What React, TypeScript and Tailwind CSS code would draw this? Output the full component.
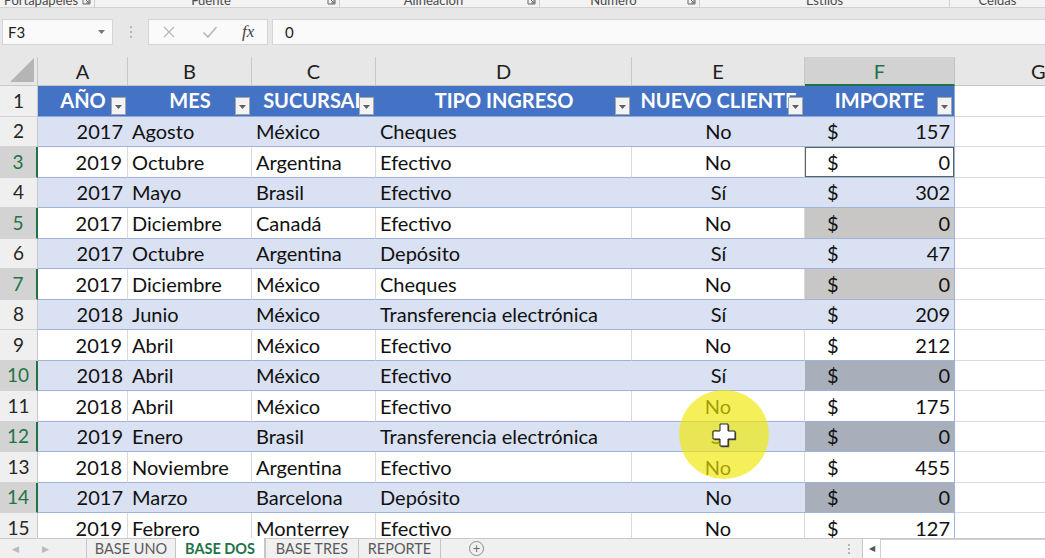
import React from 'react';

const rows = [
  { n: 2, y: 2017, m: 'Agosto', s: 'México', t: 'Cheques', c: 'No', v: 157 },
  { n: 3, y: 2019, m: 'Octubre', s: 'Argentina', t: 'Efectivo', c: 'No', v: 0 },
  { n: 4, y: 2017, m: 'Mayo', s: 'Brasil', t: 'Efectivo', c: 'Sí', v: 302 },
  { n: 5, y: 2017, m: 'Diciembre', s: 'Canadá', t: 'Efectivo', c: 'No', v: 0 },
  { n: 6, y: 2017, m: 'Octubre', s: 'Argentina', t: 'Depósito', c: 'Sí', v: 47 },
  { n: 7, y: 2017, m: 'Diciembre', s: 'México', t: 'Cheques', c: 'No', v: 0 },
  { n: 8, y: 2018, m: 'Junio', s: 'México', t: 'Transferencia electrónica', c: 'Sí', v: 209 },
  { n: 9, y: 2019, m: 'Abril', s: 'México', t: 'Efectivo', c: 'No', v: 212 },
  { n: 10, y: 2018, m: 'Abril', s: 'México', t: 'Efectivo', c: 'Sí', v: 0 },
  { n: 11, y: 2018, m: 'Abril', s: 'México', t: 'Efectivo', c: 'No', v: 175 },
  { n: 12, y: 2019, m: 'Enero', s: 'Brasil', t: 'Transferencia electrónica', c: 'Sí', v: 0 },
  { n: 13, y: 2018, m: 'Noviembre', s: 'Argentina', t: 'Efectivo', c: 'No', v: 455 },
  { n: 14, y: 2017, m: 'Marzo', s: 'Barcelona', t: 'Depósito', c: 'No', v: 0 },
  { n: 15, y: 2019, m: 'Febrero', s: 'Monterrey', t: 'Efectivo', c: 'No', v: 127 },
];

const selected = [3, 5, 7, 10, 12, 14];

const Launcher = () => (
  <svg width="9" height="9" viewBox="0 0 9 9" className="shrink-0">
    <path d="M1 1h7v7H1z" fill="none" stroke="#666" strokeWidth="1" />
    <path d="M3 3l4 4M7 4v3H4" fill="none" stroke="#666" strokeWidth="1" />
  </svg>
);

const FilterButton = () => (
  <div className="absolute right-[2px] bottom-[1px] w-[15px] h-[18px] bg-[#f3f3f3] border border-[#a6a6a6] flex items-center justify-center pt-[3px]">
    <svg width="7" height="4" viewBox="0 0 7 4">
      <path d="M0 0h7L3.5 4z" fill="#606060" />
    </svg>
  </div>
);

function RibbonLabels() {
  const groups = [
    { w: 95, label: 'Portapapeles', launcher: true, sep: true },
    { w: 245, label: 'Fuente', launcher: true, sep: true },
    { w: 200, label: 'Alineación', launcher: true, sep: true },
    { w: 160, label: 'Número', launcher: true, sep: true },
    { w: 250, label: 'Estilos', launcher: false, sep: true },
    { w: 95, label: 'Celdas', launcher: false, sep: false },
  ];
  return (
    <div className="h-[8px] shrink-0 overflow-hidden bg-[#f3f3f3] border-b border-[#d2d2d2] flex">
      {groups.map((g, i) => (
        <div key={i} style={{ width: g.w }} className="shrink-0 flex items-start -mt-[8px] h-[16px]">
          <div className="flex-1 text-center text-[13px] leading-[16px] text-[#4a4a4a]">{g.label}</div>
          {g.launcher && <div className="mt-[4px] mr-[3px]"><Launcher /></div>}
          {g.sep && <div className="w-px h-[16px] bg-[#cfcfcf]" />}
        </div>
      ))}
    </div>
  );
}

function FormulaBar() {
  return (
    <div className="h-[49px] shrink-0 bg-[#e7e7e7] flex items-start pt-[11px] pl-[2px]">
      <div className="w-[111px] h-[26px] bg-[#fafafa] border border-[#d6d6d6] flex items-center justify-between pl-[5px] pr-[7px]">
        <span className="text-[15px] text-[#222]">F3</span>
        <svg width="7" height="4" viewBox="0 0 7 4"><path d="M0 0h7L3.5 4z" fill="#777" /></svg>
      </div>
      <div className="w-[35px] h-[26px] flex flex-col items-center justify-center gap-[3px]">
        <div className="w-[2px] h-[2px] bg-[#b5b5b5]" />
        <div className="w-[2px] h-[2px] bg-[#b5b5b5]" />
        <div className="w-[2px] h-[2px] bg-[#b5b5b5]" />
      </div>
      <div className="w-[120px] h-[26px] bg-[#fafafa] border border-[#d6d6d6] flex items-center pl-[12px]">
        <svg width="14" height="14" viewBox="0 0 14 14" className="ml-[1px]">
          <path d="M2 2l10 10M12 2L2 12" stroke="#b8b8b8" strokeWidth="1.3" />
        </svg>
        <svg width="16" height="14" viewBox="0 0 16 14" className="ml-[26px]">
          <path d="M1.5 7.5l4.5 4.5 8.5-10" fill="none" stroke="#b8b8b8" strokeWidth="1.6" />
        </svg>
        <span className="ml-[24px] text-[17px] italic text-[#444] font-['Liberation_Serif',serif]">fx</span>
      </div>
      <div className="w-[4px]" />
      <div className="flex-1 h-[26px] bg-[#fafafa] border border-[#d6d6d6] border-r-0 flex items-center pl-[12px]">
        <span className="text-[15px] text-[#222]">0</span>
      </div>
    </div>
  );
}

const colW = [90, 124, 124, 256, 173, 150];
const letters = ['A', 'B', 'C', 'D', 'E', 'F'];
const headers = ['AÑO', 'MES', 'SUCURSAL', 'TIPO INGRESO', 'NUEVO CLIENTE', 'IMPORTE'];

function ColumnHeaders() {
  return (
    <div className="h-[29px] shrink-0 flex bg-[#e7e7e7]">
      <div className="w-[38px] shrink-0 relative border-r border-[#c8c8c8] border-b border-b-[#c8c8c8]">
        <svg width="24" height="24" viewBox="0 0 24 24" className="absolute right-[3px] bottom-[3px]">
          <path d="M24 0v24H0z" fill="#b5b5b5" />
        </svg>
      </div>
      {letters.map((l, i) =>
        l === 'F' ? (
          <div
            key={l}
            style={{ width: colW[i] }}
            className="shrink-0 bg-[#d2d2d2] border-r border-[#c0c0c0] border-b-2 border-b-[#217346] flex items-end justify-center pb-[1px] text-[20px] leading-[24px] text-[#217346]"
          >
            {l}
          </div>
        ) : (
          <div
            key={l}
            style={{ width: colW[i] }}
            className="shrink-0 border-r border-[#c8c8c8] border-b border-b-[#c8c8c8] flex items-end justify-center pb-[2px] text-[20px] leading-[24px] text-[#1f1f1f]"
          >
            {l}
          </div>
        )
      )}
      <div className="flex-1 border-b border-[#c8c8c8] flex items-end pb-[2px] pl-[76px] text-[20px] leading-[24px] text-[#1f1f1f]">
        G
      </div>
    </div>
  );
}

function RowHeader({ n }: { n: number }) {
  const sel = selected.includes(n);
  return (
    <div
      className={
        'w-[38px] shrink-0 h-full flex items-end justify-center pb-[3px] text-[19px] leading-[24px] border-b border-[#d3d3d3] ' +
        (sel
          ? 'bg-[#d3d3d3] text-[#217346] border-r-2 border-r-[#217346]'
          : 'bg-[#efefef] text-[#262626] border-r border-r-[#c8c8c8]')
      }
    >
      {n}
    </div>
  );
}

function HeaderRow() {
  return (
    <div className="h-[30.5px] shrink-0 flex">
      <RowHeader n={1} />
      {headers.map((h, i) => (
        <div
          key={h}
          style={{ width: colW[i] }}
          className={
            'shrink-0 h-full relative bg-[#4472c4] border-b border-[#8ea9db] flex items-end justify-center pb-[4px] text-[20px] leading-[24px] font-bold text-white overflow-hidden ' +
            (i === 5 ? 'border-r border-r-[#8ea9db]' : '')
          }
        >
          <span className="whitespace-nowrap">{h}</span>
          <FilterButton />
        </div>
      ))}
      <div className="flex-1 h-full bg-white border-b border-[#dadada]" />
    </div>
  );
}

function DataRow({ r }: { r: (typeof rows)[number] }) {
  const blue = r.n % 2 === 0;
  const base =
    'shrink-0 h-full flex items-end pb-[3px] text-[20px] leading-[24px] text-[#111] border-b border-[#9fb4dc] whitespace-nowrap overflow-hidden ';
  const fill = blue ? 'bg-[#d9e1f2] ' : 'bg-white border-r border-r-[#dadada] ';
  const sel = selected.includes(r.n);
  let fCls = 'bg-[#d9e1f2] ';
  if (!blue) fCls = 'bg-white ';
  if (sel && r.n === 3) fCls = 'bg-white shadow-[inset_0_0_0_1px_#55655c] ';
  else if (sel && blue) fCls = 'bg-[#a9afba] ';
  else if (sel) fCls = 'bg-[#c8c7c5] ';
  return (
    <div className="h-[30.5px] shrink-0 flex">
      <RowHeader n={r.n} />
      <div style={{ width: colW[0] }} className={base + fill + 'justify-end pr-[5px]'}>
        {r.y}
      </div>
      <div style={{ width: colW[1] }} className={base + fill + 'pl-[4px]'}>
        {r.m}
      </div>
      <div style={{ width: colW[2] }} className={base + fill + 'pl-[4px]'}>
        {r.s}
      </div>
      <div style={{ width: colW[3] }} className={base + fill + 'pl-[4px]'}>
        {r.t}
      </div>
      <div style={{ width: colW[4] }} className={base + fill + 'justify-center'}>
        {r.c}
      </div>
      <div
        style={{ width: colW[5] }}
        className={base + fCls + 'border-r border-r-[#9fb4dc] justify-between pl-[22px] pr-[4px]'}
      >
        <span>$</span>
        <span>{r.v}</span>
      </div>
      <div className="flex-1 h-full bg-white border-b border-[#dadada]" />
    </div>
  );
}

function TabBar() {
  const tabs = ['BASE UNO', 'BASE DOS', 'BASE TRES', 'REPORTE'];
  const widths = [89, 90, 93, 82];
  return (
    <div className="h-[20px] shrink-0 bg-[#f0f0f0] border-t border-[#c8c8c8] flex items-stretch text-[14.5px] leading-[19px]">
      <div className="w-[86px] shrink-0 flex items-center text-[9px] text-[#b9b9b9]">
        <span className="ml-[12px]">◀</span>
        <span className="ml-[23px]">▶</span>
      </div>
      {tabs.map((t, i) =>
        i === 1 ? (
          <div
            key={t}
            style={{ width: widths[i] }}
            className="shrink-0 bg-white border-l border-r border-[#c6c6c6] -mt-px flex items-center justify-center font-bold text-[#217346]"
          >
            {t}
          </div>
        ) : (
          <div
            key={t}
            style={{ width: widths[i] }}
            className="shrink-0 border-l border-[#c6c6c6] flex items-center justify-center text-[#5a5a5a]"
          >
            {t}
          </div>
        )
      )}
      <div className="w-[72px] shrink-0 border-l border-[#c6c6c6] flex items-center justify-center">
        <div className="w-[15px] h-[15px] rounded-full border border-[#8a8a8a] flex items-center justify-center text-[13px] leading-none text-[#6a6a6a]">
          +
        </div>
      </div>
      <div className="flex-1" />
      <div className="w-[14px] flex flex-col items-center justify-center gap-[2px] mr-[6px]">
        <div className="w-[2px] h-[2px] bg-[#b5b5b5]" />
        <div className="w-[2px] h-[2px] bg-[#b5b5b5]" />
        <div className="w-[2px] h-[2px] bg-[#b5b5b5]" />
      </div>
      <div className="w-[183px] shrink-0 flex bg-white border-l border-[#c8c8c8]">
        <div className="w-[18px] flex items-center justify-center text-[8px] text-[#555] border-r border-[#d0d0d0]">◀</div>
        <div className="flex-1 border-t border-[#d0d0d0]" />
      </div>
    </div>
  );
}

export default function App() {
  return (
    <div className="w-[1045px] h-[558px] overflow-hidden relative flex flex-col bg-[#e7e7e7] font-['Lato','Noto_Sans',sans-serif]">
      <RibbonLabels />
      <FormulaBar />
      <ColumnHeaders />
      <div className="flex-1 overflow-hidden flex flex-col bg-white">
        <HeaderRow />
        {rows.map((r) => (
          <DataRow key={r.n} r={r} />
        ))}
      </div>
      <TabBar />

      {/* cursor highlight */}
      <div className="absolute left-[679px] top-[390px] w-[90px] h-[89px] rounded-full bg-[#f0e800]/65 blur-[0.5px] pointer-events-none" />
      <svg width="26" height="26" viewBox="0 0 26 26" className="absolute left-[711px] top-[422px] pointer-events-none">
        <path d="M9 2h8v7h7v8h-7v7H9v-7H2V9h7z" fill="#555" transform="translate(1.2 1.2)" />
        <path d="M9 2h8v7h7v8h-7v7H9v-7H2V9h7z" fill="#fff" stroke="#222" strokeWidth="1" />
      </svg>
    </div>
  );
}
